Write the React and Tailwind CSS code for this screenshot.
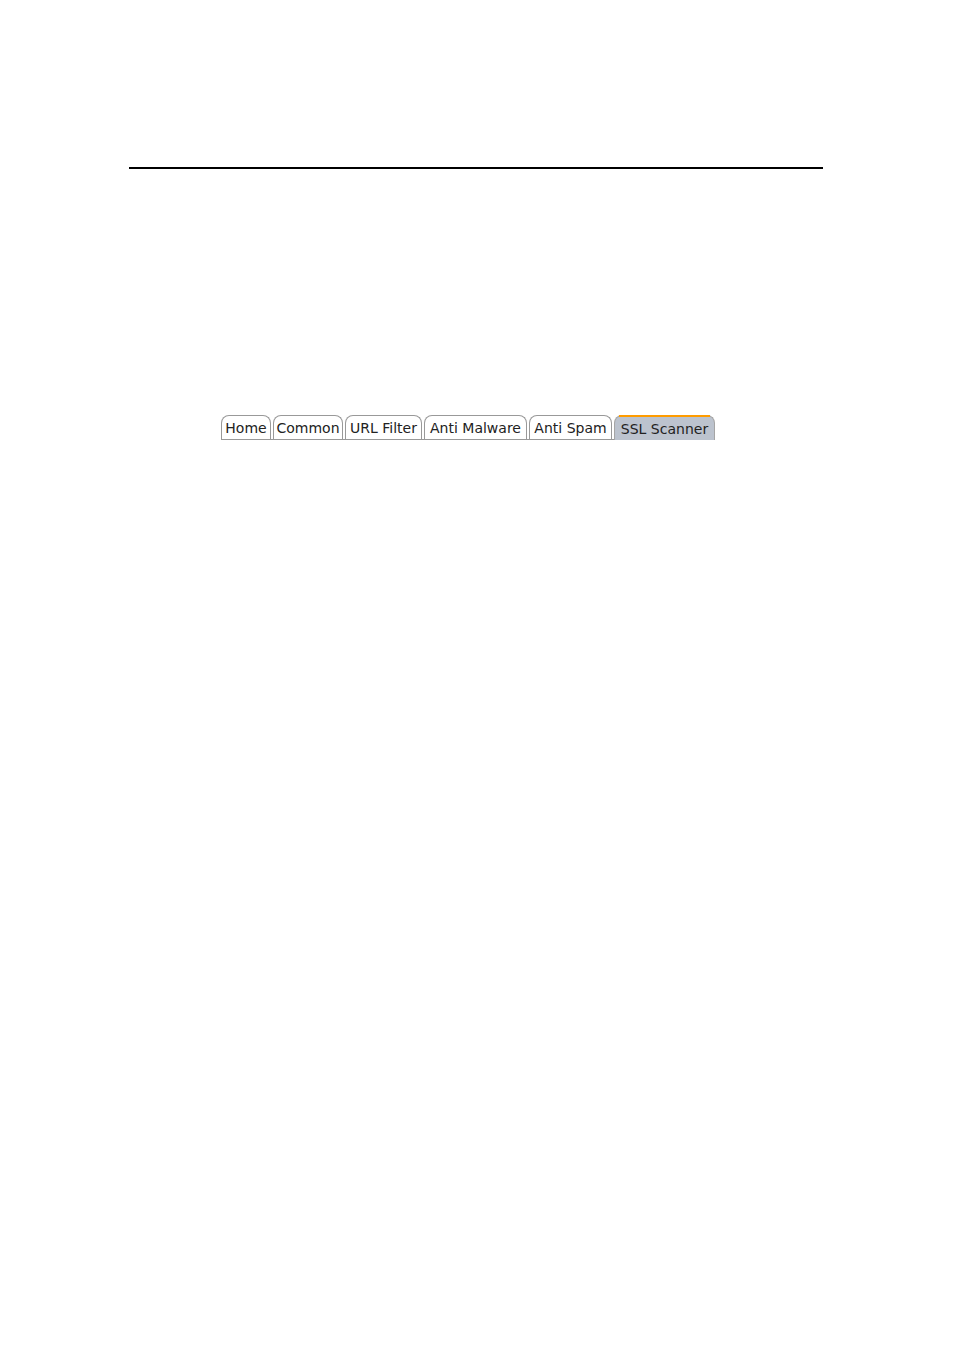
import { useState } from "react";
import clsx from "clsx";

const tabs = [
  { name: "Home", width: "min-w-[50px]" },
  { name: "Common", width: "min-w-[70px]" },
  { name: "URL Filter", width: "min-w-[77px]" },
  { name: "Anti Malware", width: "min-w-[103px]" },
  { name: "Anti Spam", width: "min-w-[83px]" },
  { name: "SSL Scanner", width: "min-w-[101px]" },
];

// the active tab is one pixel taller so it covers the line under the row
const Tab = ({ name, width, active, onClick }) => (
  <button
    type="button"
    role="tab"
    aria-selected={active}
    onClick={onClick}
    className={clsx(
      "relative rounded-t-lg border border-b-0 text-center whitespace-nowrap",
      width,
      active
        ? "h-[25px] -mb-px bg-[#bcc3ce] border-[#a5a5a5] pt-[2px]"
        : "h-6 bg-white border-[#999999] pt-px"
    )}
  >
    {active && (
      <span className="absolute -top-px left-1 right-1 h-[2px] bg-[#ff9c00]" />
    )}
    {name}
  </button>
);

const App = () => {
  const [current, setCurrent] = useState("SSL Scanner");

  return (
    <div className="min-h-screen bg-white pt-[167px] pl-[129px] pr-[131px]">
      <hr className="border-t-2 border-black" />
      <main className="pt-[246px] pl-[92px]">
        <div
          role="tablist"
          className="flex w-fit gap-[2px] border-b border-[#999999] font-['DejaVu_Sans',Verdana,sans-serif] text-[14px] leading-[20px] text-[#222222]"
        >
          {tabs.map((tab) => (
            <Tab
              key={tab.name}
              name={tab.name}
              width={tab.width}
              active={tab.name === current}
              onClick={() => setCurrent(tab.name)}
            />
          ))}
        </div>
      </main>
    </div>
  );
};

export default App;
